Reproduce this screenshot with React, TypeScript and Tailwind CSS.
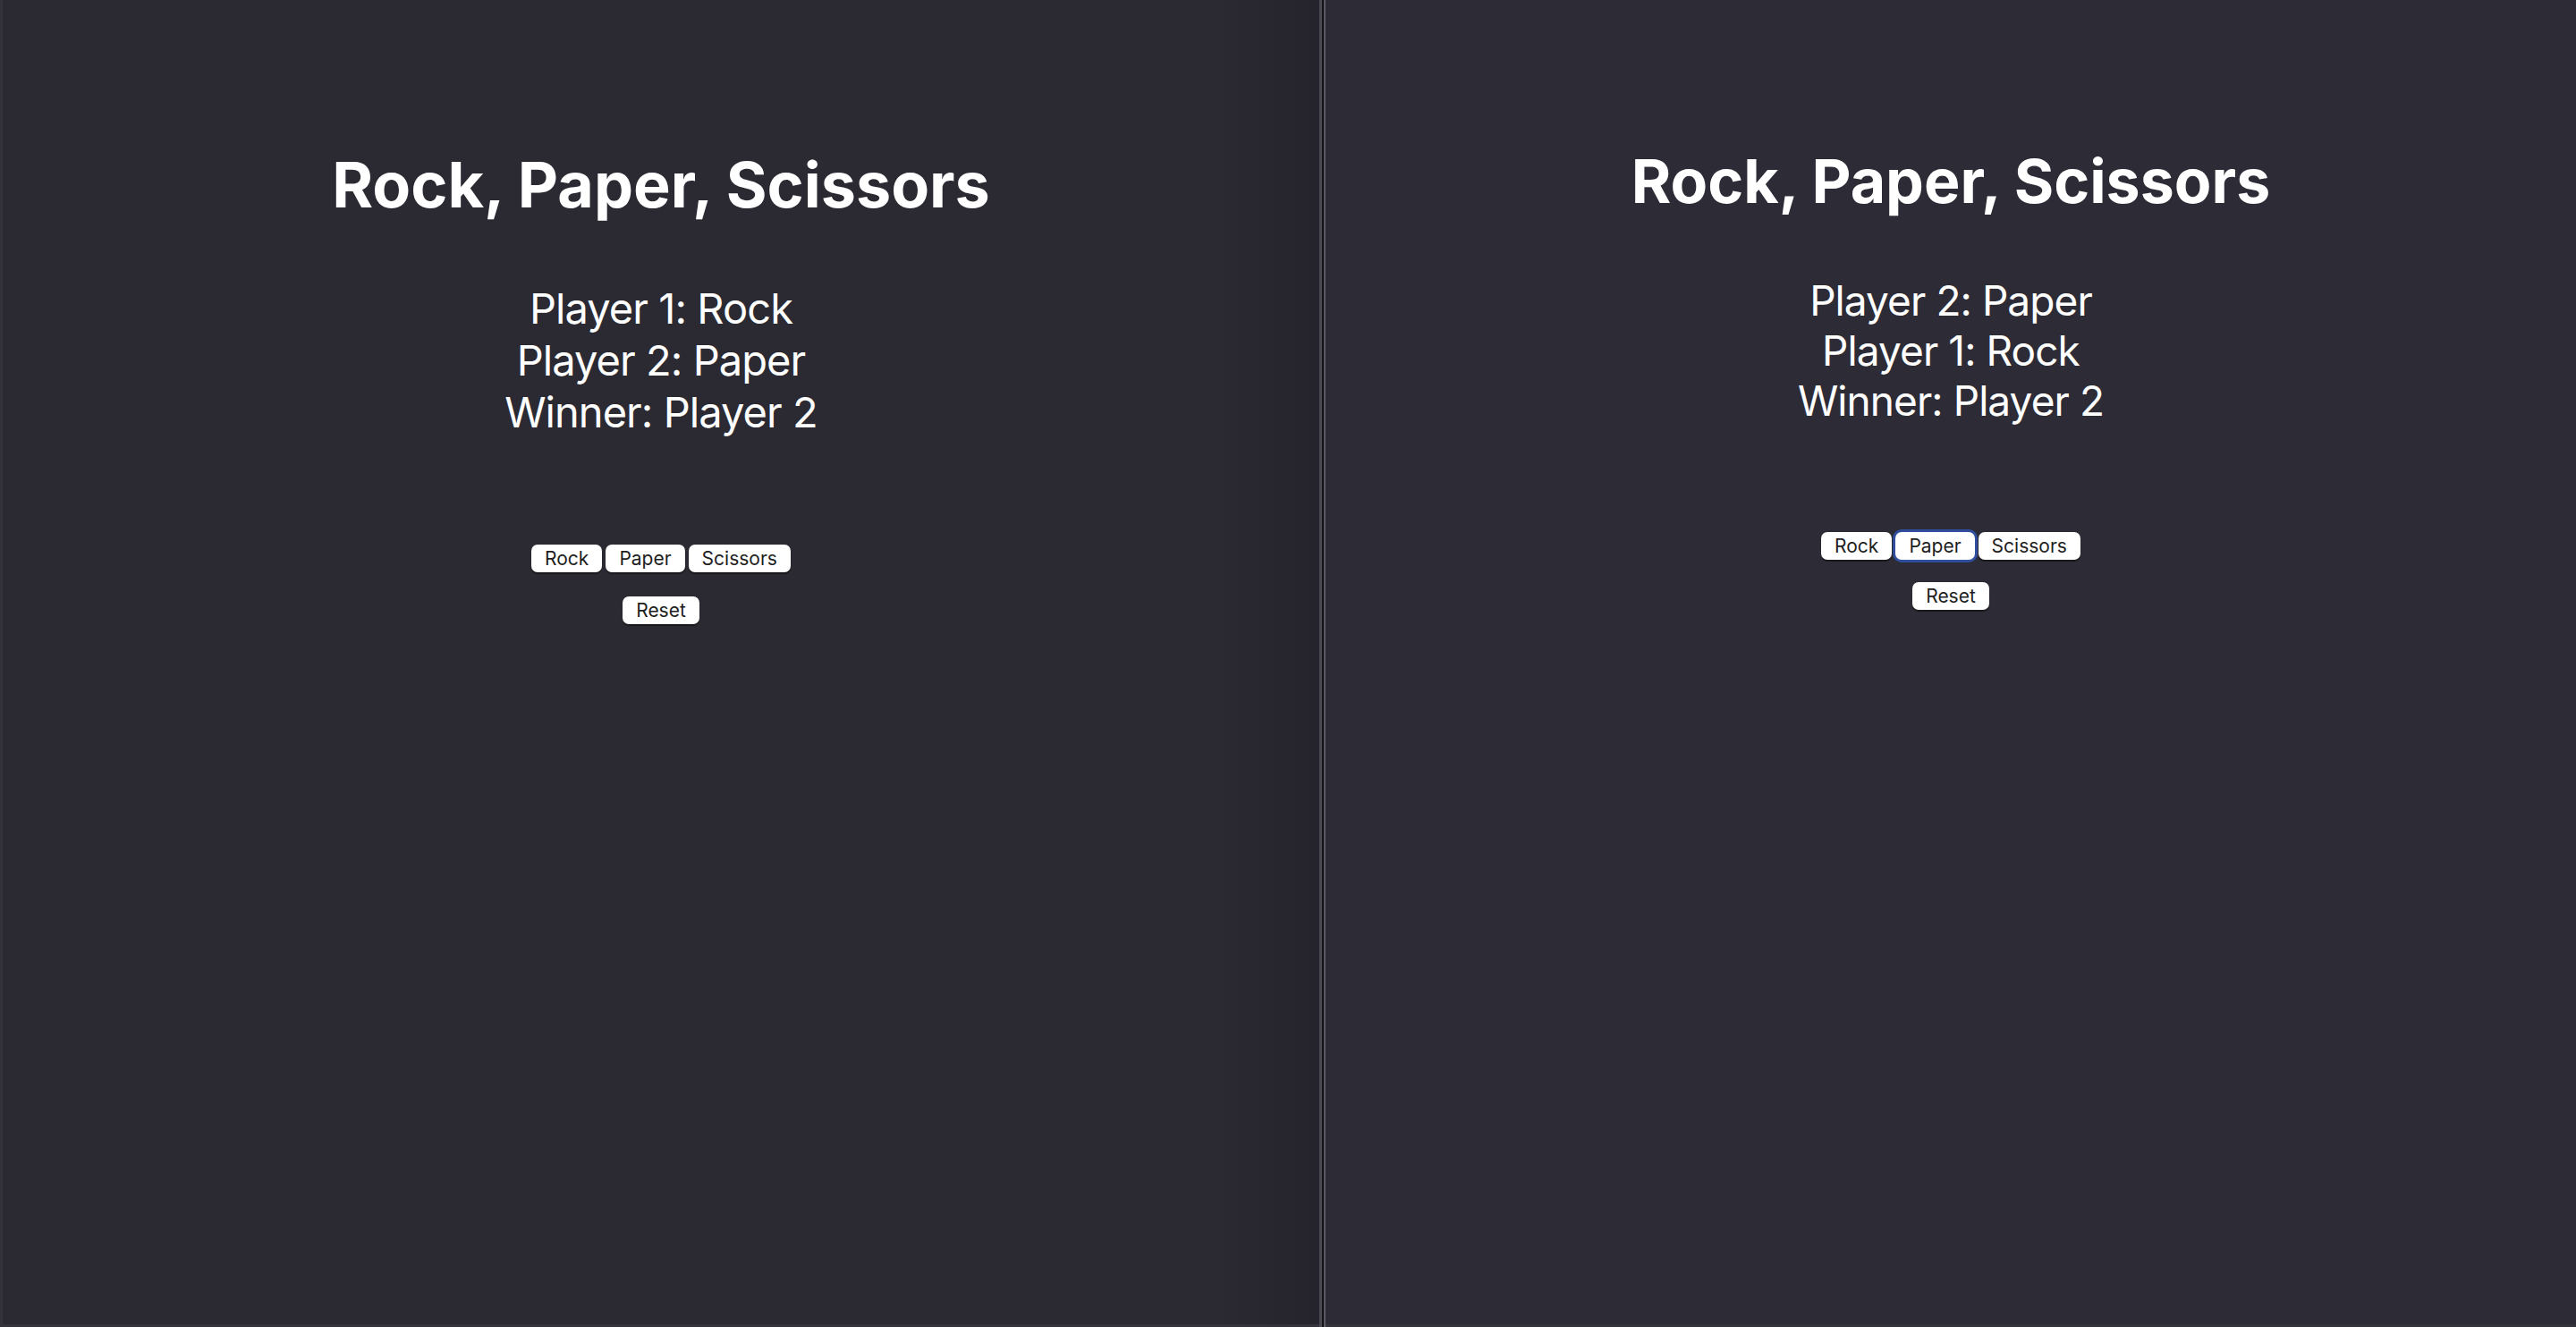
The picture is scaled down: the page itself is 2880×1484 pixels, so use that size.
import React from "react";

const font = { fontFamily: "Inter, 'Noto Sans', sans-serif" };

interface PaneProps {
  lines: string[];
  focused?: string;
  size: "lg" | "md";
}

function GameButton({ label, focused }: { label: string; focused?: boolean }) {
  return (
    <button
      className={`h-[31px] px-[15px] text-[21px] leading-none bg-white text-[#1e1e1e] rounded-[7px] shadow-[0_2px_1px_rgba(0,0,0,0.45)] ${
        focused ? "ring-[3px] ring-[#2f4f9e]" : ""
      }`}
    >
      {label}
    </button>
  );
}

function Pane({ lines, focused, size }: PaneProps) {
  const lg = size === "lg";
  return (
    <div className="flex flex-col items-center text-white">
      <h1 className={`font-bold ${lg ? "mt-[166px] text-[70px] leading-[82px]" : "mt-[162px] text-[68px] leading-[80px]"}`}>
        Rock, Paper, Scissors
      </h1>
      <div
        className={`flex flex-col items-center tracking-[-0.02em] ${
          lg ? "mt-[68px] text-[47px] leading-[58px]" : "mt-[66px] text-[46px] leading-[56px]"
        }`}
      >
        {lines.map((l) => (
          <p key={l}>{l}</p>
        ))}
      </div>
      <div className="flex gap-[4px] mt-[119px]">
        {["Rock", "Paper", "Scissors"].map((b) => (
          <GameButton key={b} label={b} focused={focused === b} />
        ))}
      </div>
      <div className={lg ? "mt-[27px]" : "mt-[25px]"}>
        <GameButton label="Reset" />
      </div>
    </div>
  );
}

export default function App() {
  return (
    <div className="flex h-[1484px] w-[2880px] overflow-hidden" style={font}>
      <div className="w-[1475px] h-full bg-[#2b2a33] bg-gradient-to-r from-[#2b2a33] from-[92%] to-[#25242d] border-l-[3px] border-[#34333c] border-b-[3px]">
        <Pane size="lg" lines={["Player 1: Rock", "Player 2: Paper", "Winner: Player 2"]} />
      </div>
      <div className="w-[3px] h-full bg-[#4a4952]" />
      <div className="w-[2px] h-full bg-[#141318]" />
      <div className="w-[2px] h-full bg-[#5a5962]" />
      <div className="flex-1 h-full bg-[#2d2c36] border-b-[3px] border-[#34333c]">
        <Pane size="md" focused="Paper" lines={["Player 2: Paper", "Player 1: Rock", "Winner: Player 2"]} />
      </div>
    </div>
  );
}
